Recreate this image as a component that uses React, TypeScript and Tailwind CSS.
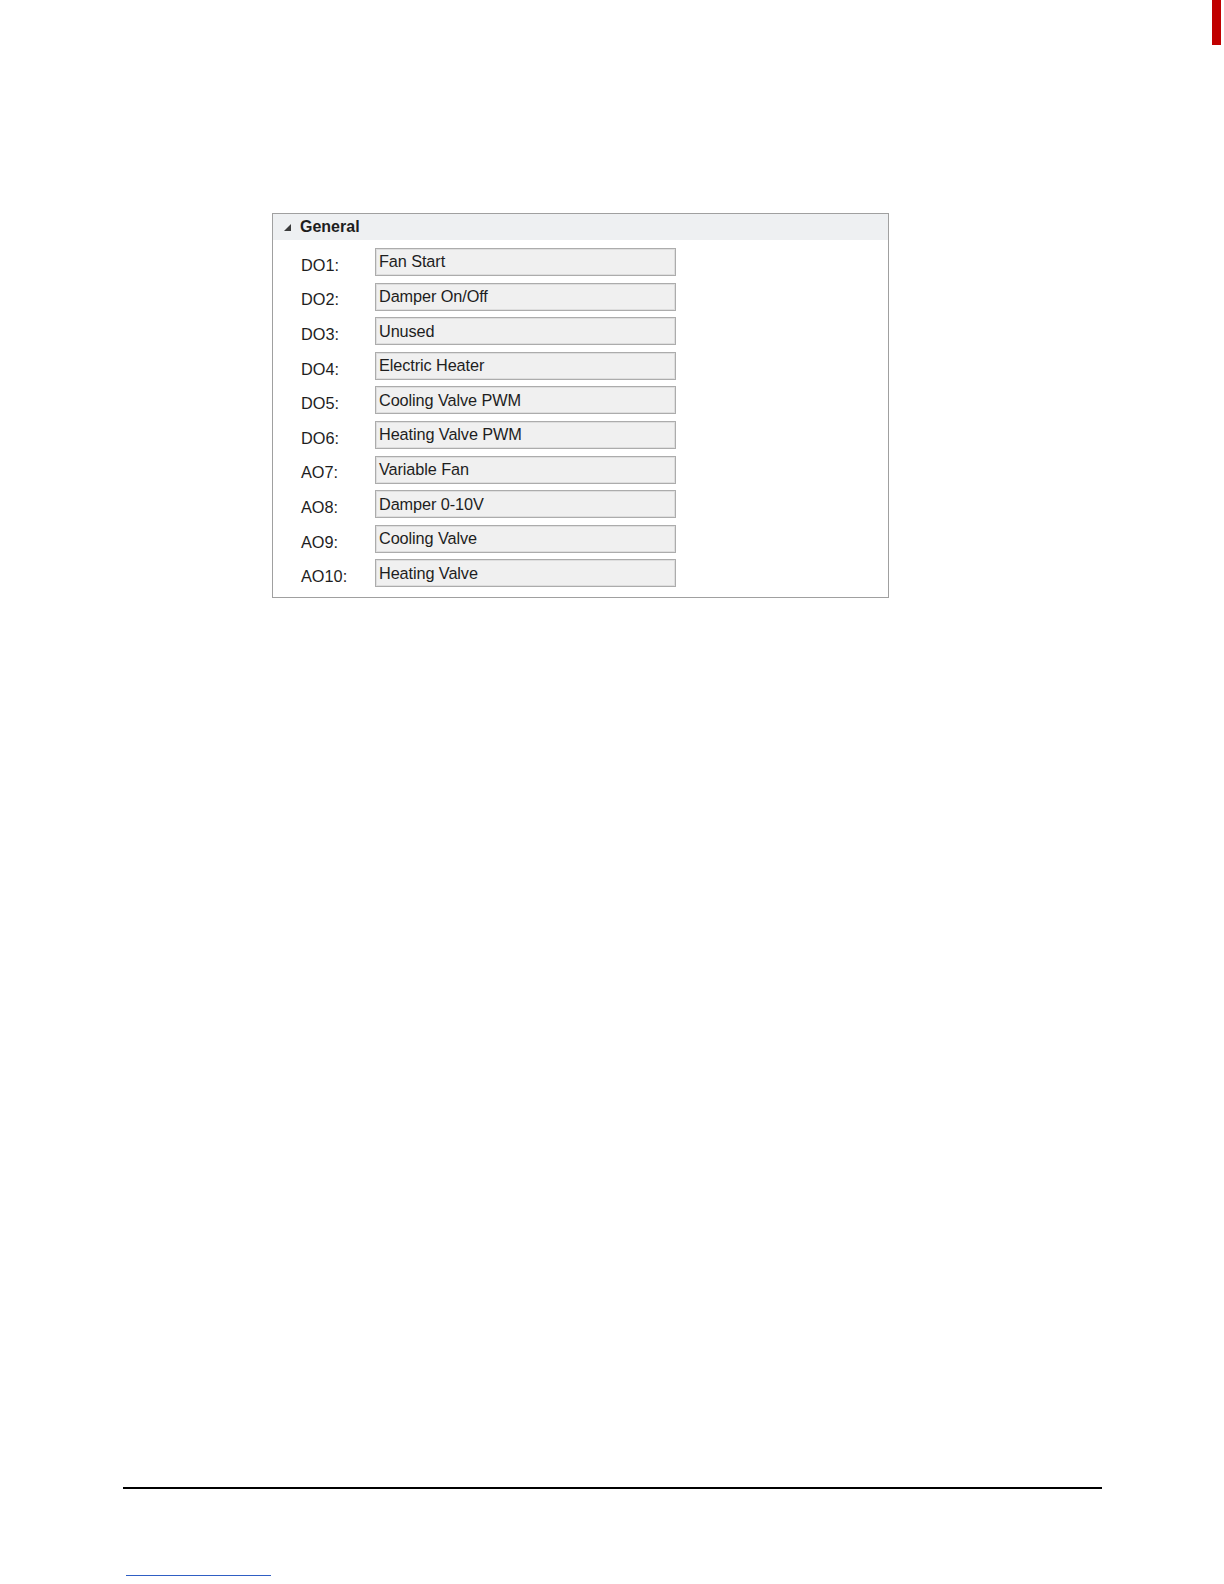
const rows = [
  { label: 'DO1:', value: 'Fan Start' },
  { label: 'DO2:', value: 'Damper On/Off' },
  { label: 'DO3:', value: 'Unused' },
  { label: 'DO4:', value: 'Electric Heater' },
  { label: 'DO5:', value: 'Cooling Valve PWM' },
  { label: 'DO6:', value: 'Heating Valve PWM' },
  { label: 'AO7:', value: 'Variable Fan' },
  { label: 'AO8:', value: 'Damper 0-10V' },
  { label: 'AO9:', value: 'Cooling Valve' },
  { label: 'AO10:', value: 'Heating Valve' },
]

export default function App() {
  return (
    <div className="relative w-[1224px] h-[1584px] bg-white font-['Liberation_Sans',Arial,sans-serif] text-[#1e1e1e]">
      {/* page marker, top right */}
      <div className="absolute top-0 right-[3px] w-[9px] h-[45px] bg-[#c00000]" />

      <div className="pt-[213px] pl-[272px]">
        <div className="w-[617px] h-[385px] border border-[#a0a0a0] bg-white">
          {/* category header */}
          <div className="h-[26px] bg-[#eef0f2] flex items-center pl-[11px] gap-[9px]">
            <svg width="7" height="7" viewBox="0 0 7 7" className="mt-[1px]">
              <polygon points="7,0 7,7 0,7" fill="#3c3c3c" />
            </svg>
            <span className="text-[16px] font-bold leading-none">General</span>
          </div>

          {/* properties */}
          <div className="pl-[28px] pt-[8px] flex flex-col gap-[6.6px]">
            {rows.map(r => (
              <div key={r.label} className="flex items-center h-[28px]">
                <span className="w-[74px] pt-[6px] text-[16.3px] leading-none">{r.label}</span>
                <div className="w-[301px] h-[28px] bg-[#f0f0f0] border border-[#acacac] shadow-[inset_0_0_0_1px_#dedede] flex items-center pl-[3px] pb-[1px]">
                  <span className="text-[16.3px] leading-none tracking-[-0.1px]">{r.value}</span>
                </div>
              </div>
            ))}
          </div>
        </div>
      </div>

      {/* footer rule */}
      <div className="mt-[889px] ml-[123px] w-[979px] h-[2px] bg-black" />
      <div className="mt-[86px] ml-[126px] w-[145px] h-px bg-[#2f5fc4]" />
    </div>
  )
}
